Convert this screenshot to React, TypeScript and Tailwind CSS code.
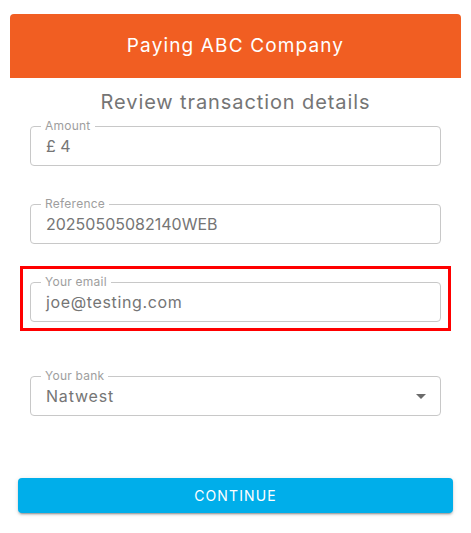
import React from "react";

const font = { fontFamily: "Inter, 'Open Sans', sans-serif" };

function Field({ label, value, select, valueClass = "" }: { label: string; value: string; select?: boolean; valueClass?: string }) {
  return (
    <fieldset className="border border-[#c8c8c8] rounded-[4px] mx-0 px-[15px] pt-[2px] pb-[7px] m-0 min-w-0">
      <legend className="text-[12px] leading-[12px] text-[#9e9e9e] px-[4px] ml-[-5px] tracking-[0.02em]">{label}</legend>
      <div className="flex items-center justify-between h-[24px]">
        <span className={"text-[16px] leading-[24px] text-[#757575] " + valueClass}>{value}</span>
        {select && (
          <svg width="24" height="24" viewBox="0 0 24 24" className="mr-[-8px] text-[#6b6b6b]" fill="currentColor">
            <path d="M7 10l5 5 5-5z" />
          </svg>
        )}
      </div>
    </fieldset>
  );
}

export default function App() {
  return (
    <div className="w-[471px] h-[533px] bg-white" style={font}>
      <div className="px-[10px] pt-[14px]">
        <div className="h-[64px] bg-[#f15e22] rounded-t-[4px] flex items-center justify-center">
          <span className="text-white text-[19px] tracking-[0.06em]">Paying ABC Company</span>
        </div>
        <div className="text-center text-[20px] leading-[24px] text-[#757575] mt-[12px] tracking-[0.045em]">Review transaction details</div>
        <div className="px-[20px] mt-[6px] flex flex-col">
          <Field label="Amount" value="£ 4" />
          <div className="mt-[32px]">
            <Field label="Reference" value="20250505082140WEB" />
          </div>
          <div className="mt-[22px] mx-[-10px] border-[3px] border-[#ff0000] px-[7px] pt-[7px] pb-[6px]">
            <Field label="Your email" value="joe@testing.com" valueClass="tracking-[0.04em]" />
          </div>
          <div className="mt-[39px]">
            <Field label="Your bank" value="Natwest" select valueClass="tracking-[0.05em]" />
          </div>
        </div>
        <div className="px-[8px] mt-[62px]">
          <button className="w-full h-[35px] bg-[#00aeea] rounded-[4px] text-white text-[14px] tracking-[0.08em] uppercase shadow-[0_3px_1px_-2px_rgba(0,0,0,0.2),0_2px_2px_0_rgba(0,0,0,0.14),0_1px_5px_0_rgba(0,0,0,0.12)]">
            Continue
          </button>
        </div>
      </div>
    </div>
  );
}
